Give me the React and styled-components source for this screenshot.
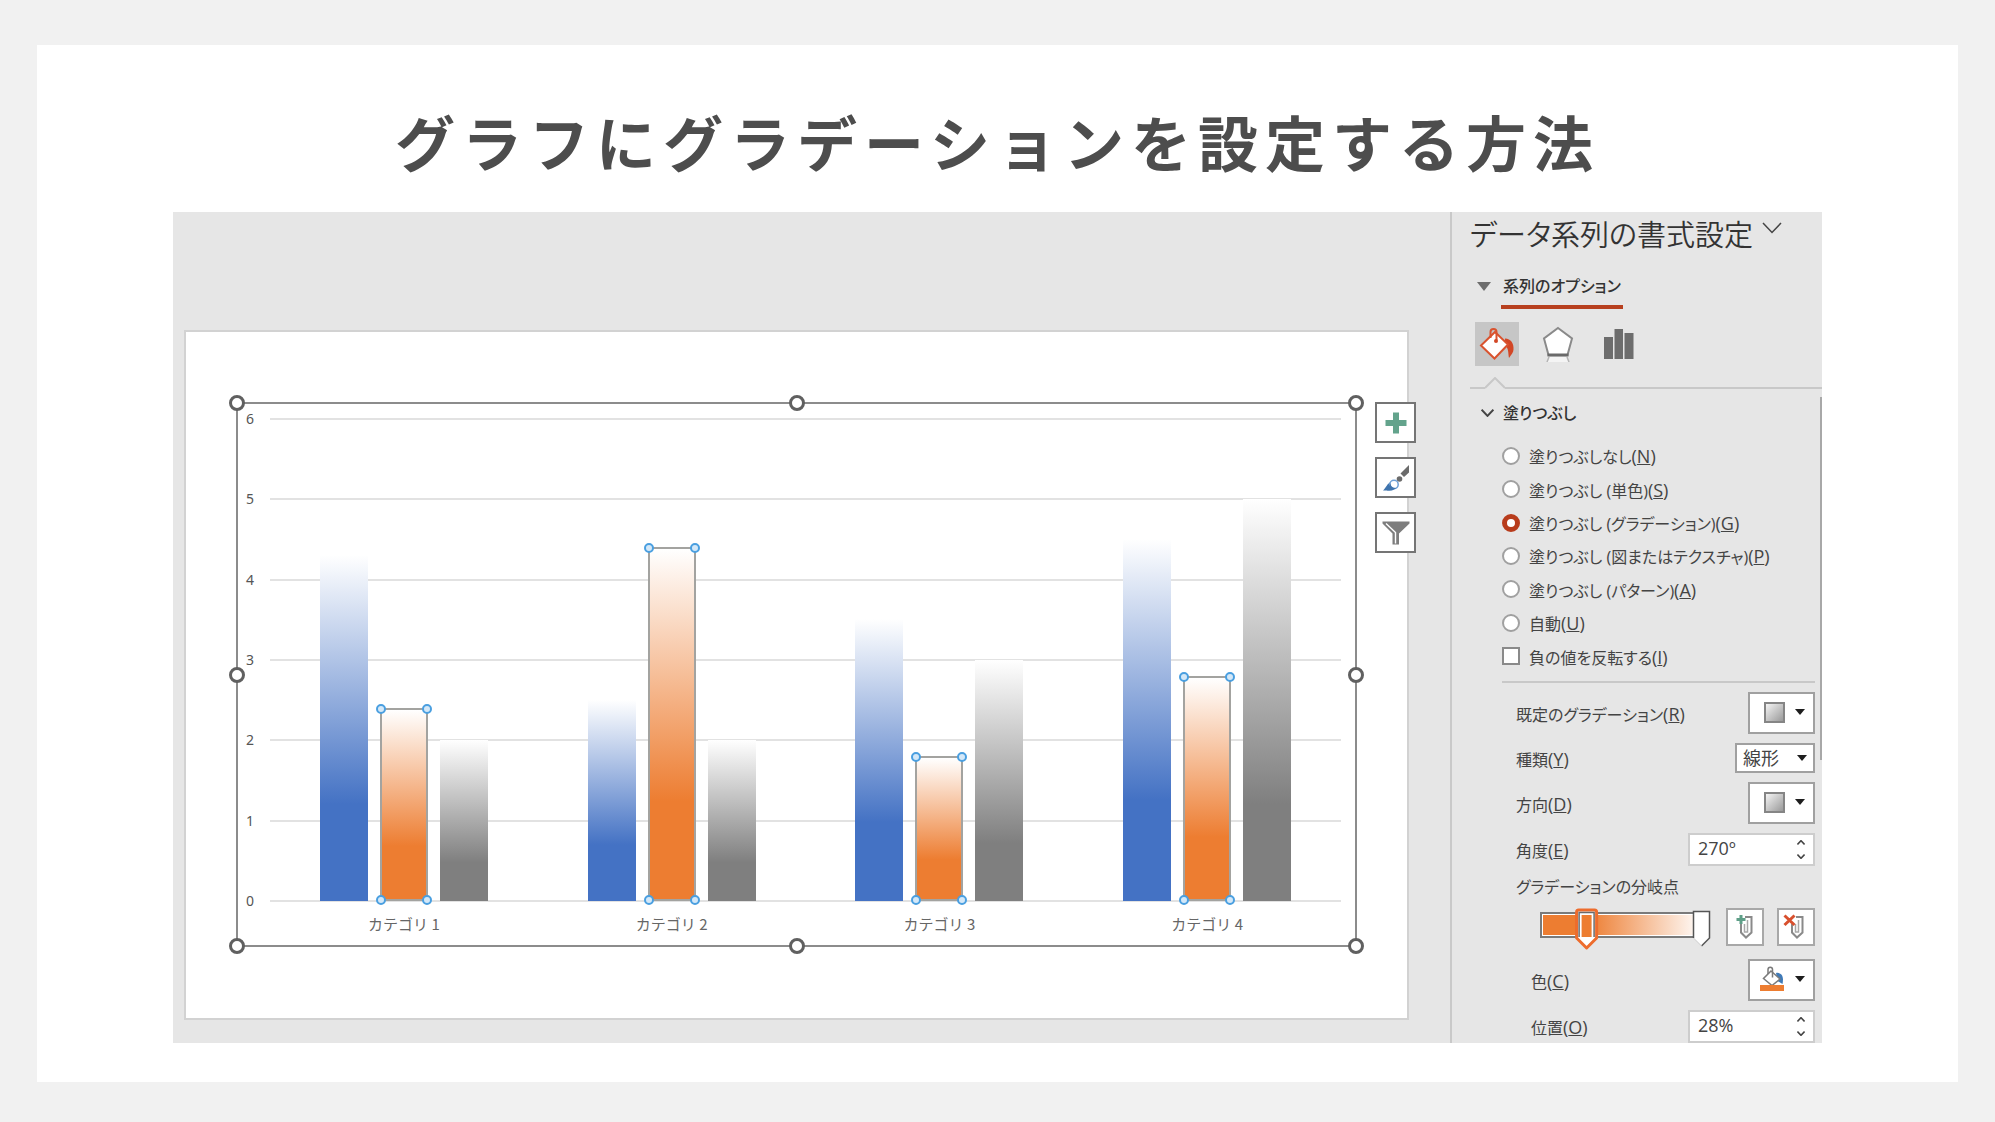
import React, { useState } from 'react';
import styled, { createGlobalStyle, css } from 'styled-components';

const SERIES = [
  { id: 'blue', color: '#4472c4', stop: 28 },
  { id: 'orange', color: '#ed7d31', stop: 28, selected: true },
  { id: 'gray', color: '#7f7f7f', stop: 24 },
];

const CATEGORIES = [
  { label: 'カテゴリ 1', values: [4.3, 2.4, 2] },
  { label: 'カテゴリ 2', values: [2.5, 4.4, 2] },
  { label: 'カテゴリ 3', values: [3.5, 1.8, 3] },
  { label: 'カテゴリ 4', values: [4.5, 2.8, 5] },
];

const TICKS = [6, 5, 4, 3, 2, 1, 0];
const MAX = 6;

const FILLS = [
  { id: 'none', text: '塗りつぶしなし', accessKey: 'N' },
  { id: 'solid', text: '塗りつぶし (単色)', accessKey: 'S' },
  { id: 'gradient', text: '塗りつぶし (グラデーション)', accessKey: 'G' },
  { id: 'picture', text: '塗りつぶし (図またはテクスチャ)', accessKey: 'P' },
  { id: 'pattern', text: '塗りつぶし (パターン)', accessKey: 'A' },
  { id: 'auto', text: '自動', accessKey: 'U' },
];

const FRAME_HANDLES = ['0 0', '50% 0', '100% 0', '0 50%', '100% 50%', '0 100%', '50% 100%', '100% 100%'];
const BAR_HANDLES = ['0 0', '100% 0', '0 100%', '100% 100%'];

const Keyed = ({ text, k }) => (
  <KeyedText>
    {text}
    <AccessKey>
      (<u>{k}</u>)
    </AccessKey>
  </KeyedText>
);

const Caret = () => (
  <svg width="10" height="6" viewBox="0 0 10 6" aria-hidden="true">
    <path d="M0 0h10L5 6z" fill="#1e1e1e" />
  </svg>
);

const Chevron = ({ width, height, strokeWidth = 2, up }) => (
  <svg width={width} height={height} viewBox="0 0 20 12" aria-hidden="true">
    <path
      d={up ? 'M1 11L10 1.5L19 11' : 'M1 1L10 10.5L19 1'}
      fill="none"
      stroke="#444"
      strokeWidth={strokeWidth}
    />
  </svg>
);

const FillIcon = () => (
  <svg width="36" height="34" viewBox="0 0 36 34" aria-hidden="true">
    <path d="M26 11.500c6 0 9 5 8.500 11c0 3-2 5-4.500 8.500c-1-5 0-9-4-13z" fill="#d24726" />
    <path d="M16 5L29 17.500L15.500 31.500L2 18.500z" fill="#fff" stroke="#d9532f" strokeWidth="2" />
    <path d="M11.500 11V5c0-4 6-4 6 0v8" fill="none" stroke="#d9532f" strokeWidth="2" />
    <circle cx="17" cy="14" r="2" fill="#d24726" />
  </svg>
);

const EffectsIcon = () => (
  <svg width="32" height="36" viewBox="0 0 32 36" aria-hidden="true">
    <path d="M16 2L30 12.500L25.500 29H6.500L2 12.500z" fill="#fff" stroke="#8a8a8a" strokeWidth="2" />
    <path d="M5.500 29h21" stroke="#6a6a6a" strokeWidth="3" />
    <path d="M7 31h18l2 5H5z" fill="#f4f4f4" />
    <path d="M7 31l-2 5M25 31l2 5" stroke="#b5b5b5" strokeWidth="1.500" />
  </svg>
);

const SeriesIcon = () => (
  <svg width="30" height="32" viewBox="0 0 30 32" aria-hidden="true">
    <path d="M0 9h9v22H0zM10.500 1h8.500v30h-8.500zM20.500 5h9v26h-9z" fill="#6d6d6d" />
  </svg>
);

const PlusIcon = () => (
  <svg width="22" height="22" viewBox="0 0 22 22" aria-hidden="true">
    <path d="M8 0.500h6V8h7.500v6H14v7.500H8V14H0.500V8H8z" fill="#63a38c" />
  </svg>
);

const BrushIcon = () => (
  <svg width="28" height="28" viewBox="0 0 28 28" aria-hidden="true">
    <path d="M27 1v7.500l-5 4.500l-3.500-3.500z" fill="#6b6b6b" />
    <circle cx="17.500" cy="15" r="2.800" fill="#6b6b6b" />
    <path d="M1 26.500C4 24 5 19 10 17.500c4-1 7 3 4 6.500c-3 3-8 2.500-13 2.500z" fill="#3f74ae" />
    <circle cx="12" cy="20.500" r="4.200" fill="#fff" stroke="#6fa0d6" strokeWidth="1.500" />
    <path d="M8.500 19c0 4 3 5 6 5l-4.500 2.500H5z" fill="#3f74ae" />
  </svg>
);

const FilterIcon = () => (
  <svg width="28" height="24" viewBox="0 0 28 24" aria-hidden="true">
    <path d="M0.500 0.500h27v2L17 12.500V23.500h-6.500V12.500L0.500 2.500z" fill="#7d7d7d" />
    <path d="M4 2.500l9.500 9v11" fill="none" stroke="#fff" strokeWidth="1.400" />
  </svg>
);

const Clip = () => (
  <>
    <path d="M14 4h6.500v15.500l-5.500 5l-5-5V11" fill="none" stroke="#8a8a8a" strokeWidth="2" />
    <path d="M13.500 11v8h3V7" fill="none" stroke="#a8a8a8" strokeWidth="1.500" />
  </>
);

const AddStopIcon = () => (
  <svg width="28" height="28" viewBox="0 0 28 28" aria-hidden="true">
    <Clip />
    <path d="M8.500 2h3v3h3v3h-3v3h-3V8h-3V5h3z" fill="#5f9f88" />
  </svg>
);

const RemoveStopIcon = () => (
  <svg width="28" height="28" viewBox="0 0 28 28" aria-hidden="true">
    <Clip />
    <path d="M2.500 2.500l10 9.500M12.500 2.500l-10 9.500" stroke="#d8502e" strokeWidth="3" />
  </svg>
);

const ColorIcon = () => (
  <svg width="26" height="26" viewBox="0 0 26 26" aria-hidden="true">
    <path d="M17 7c6-1 8 4 6.500 11l-5-3z" fill="#3f7ab8" />
    <path d="M12 5l9 8L13 19.500L4.500 12.500z" fill="#fff" stroke="#7a7a7a" strokeWidth="1.500" />
    <path d="M9 8V3.500c0-3 4.500-3 4.500 0v8" fill="none" stroke="#7a7a7a" strokeWidth="1.500" />
    <path d="M1 19h24v6H1z" fill="#ed7d31" />
  </svg>
);

const GradientStops = ({ position, onChange }) => {
  const x = 14 + position * 1.2;

  return (
    <StopSlider>
      <svg width="174" height="42" viewBox="0 0 174 42" aria-hidden="true">
        <defs>
          <linearGradient id="stops">
            <stop offset={`${position}%`} stopColor="#ed7d31" />
            <stop offset="100%" stopColor="#fff" />
          </linearGradient>
        </defs>
        <rect x="2" y="5" width="164" height="24" fill="#fff" stroke="#7a7a7a" strokeWidth="2" />
        <rect x="4" y="7" width="160" height="20" fill="url(#stops)" />
        <path d="M154.500 3.500h16V30l-8 8l-8-8z" fill="#fff" />
        <path d="M154.500 30V3.500h16V30l-8 8" fill="none" stroke="#555" strokeWidth="1.500" />
        <path d="M154.500 30l8 8" stroke="#ccc" strokeWidth="1" />
        <path
          d={`M${x - 8} 2h16q2 0 2 2v26L${x} 40L${x - 10} 30V4q0-2 2-2z`}
          fill="#fff"
          stroke="#ed6c2d"
          strokeWidth="3"
          strokeLinejoin="round"
        />
        <path d={`M${x - 7.5} 29V4.500h15V29`} fill="none" stroke="#6a6a6a" strokeWidth="1.500" />
        <rect x={x - 5} y="7" width="10" height="22" fill="#ed7d31" />
      </svg>
      <StopRange
        type="range"
        aria-label="グラデーションの分岐点"
        min="0"
        max="100"
        value={position}
        onChange={e => onChange(Number(e.target.value))}
      />
    </StopSlider>
  );
};

const Spinner = ({ id, value, onStep, onChange }) => (
  <SpinnerBox>
    <SpinnerInput id={id} type="text" value={value} onChange={onChange} />
    <SpinnerButtons>
      <StepButton type="button" aria-label="増やす" onClick={() => onStep(1)}>
        <Chevron width={8} height={5} strokeWidth={4} up />
      </StepButton>
      <StepButton type="button" aria-label="減らす" onClick={() => onStep(-1)}>
        <Chevron width={8} height={5} strokeWidth={4} />
      </StepButton>
    </SpinnerButtons>
  </SpinnerBox>
);

const Chart = () => (
  <ChartFrame>
    <Axis>
      {TICKS.map(tick => (
        <Tick key={tick}>{tick}</Tick>
      ))}
    </Axis>
    <Plot>
      {TICKS.map(tick => (
        <GridLine key={tick} />
      ))}
      <Groups>
        {CATEGORIES.map(({ label, values }) => (
          <Group key={label}>
            {SERIES.map((series, i) => (
              <Bar
                key={series.id}
                $color={series.color}
                $stop={series.stop}
                $selected={series.selected}
                style={{ height: `${(values[i] / MAX) * 100}%` }}
              >
                {series.selected && (
                  <HandleLayer>
                    {BAR_HANDLES.map(at => (
                      <BarHandle key={at} $at={at} />
                    ))}
                  </HandleLayer>
                )}
              </Bar>
            ))}
          </Group>
        ))}
      </Groups>
    </Plot>
    <Labels>
      {CATEGORIES.map(({ label }) => (
        <span key={label}>{label}</span>
      ))}
    </Labels>
    <HandleLayer>
      {FRAME_HANDLES.map(at => (
        <FrameHandle key={at} $at={at} />
      ))}
    </HandleLayer>
    <ChartButtons>
      <ChartButton type="button" aria-label="グラフ要素">
        <PlusIcon />
      </ChartButton>
      <ChartButton type="button" aria-label="グラフ スタイル">
        <BrushIcon />
      </ChartButton>
      <ChartButton type="button" aria-label="グラフ フィルター">
        <FilterIcon />
      </ChartButton>
    </ChartButtons>
  </ChartFrame>
);

const FormatPanel = () => {
  const [fill, setFill] = useState('gradient');
  const [invert, setInvert] = useState(false);
  const [angle, setAngle] = useState(270);
  const [position, setPosition] = useState(28);

  const clamp = value => Math.min(100, Math.max(0, value));

  return (
    <Panel>
      <PanelHeader>
        <PanelTitle>データ系列の書式設定</PanelTitle>
        <PlainButton type="button" aria-label="作業ウィンドウのオプション">
          <Chevron width={20} height={12} strokeWidth={1.5} />
        </PlainButton>
      </PanelHeader>
      <OptionsButton type="button">
        <svg width="14" height="9" viewBox="0 0 14 9" aria-hidden="true">
          <path d="M0 0h14L7 9z" fill="#6d6d6d" />
        </svg>
        <OptionsLabel>系列のオプション</OptionsLabel>
      </OptionsButton>
      <Tabs>
        <Tab type="button" aria-label="塗りつぶしと線" $active>
          <FillIcon />
        </Tab>
        <Tab type="button" aria-label="効果">
          <EffectsIcon />
        </Tab>
        <Tab type="button" aria-label="系列のオプション">
          <SeriesIcon />
        </Tab>
      </Tabs>
      <TabRule>
        <RuleStart />
        <svg width="20" height="12" viewBox="0 0 20 12" aria-hidden="true">
          <path d="M0 11L10 1L20 11" fill="none" stroke="#c8c8c8" strokeWidth="2" />
        </svg>
        <RuleEnd />
      </TabRule>
      <SectionButton type="button" aria-expanded="true">
        <Chevron width={13} height={8} strokeWidth={3} />
        塗りつぶし
      </SectionButton>
      <FillOptions aria-label="塗りつぶし">
        {FILLS.map(({ id, text, accessKey }) => (
          <Choice key={id}>
            <Radio
              type="radio"
              name="fill"
              checked={fill === id}
              onChange={() => setFill(id)}
            />
            <Keyed text={text} k={accessKey} />
          </Choice>
        ))}
        <Choice>
          <Checkbox
            type="checkbox"
            checked={invert}
            onChange={e => setInvert(e.target.checked)}
          />
          <Keyed text="負の値を反転する" k="I" />
        </Choice>
      </FillOptions>
      <Fields>
        <Field>
          <label htmlFor="preset"><Keyed text="既定のグラデーション" k="R" /></label>
          <MenuButton id="preset" type="button" aria-haspopup="true">
            <Swatch />
            <Caret />
          </MenuButton>
        </Field>
        <Field>
          <label htmlFor="kind"><Keyed text="種類" k="Y" /></label>
          <SelectBox>
            <Select id="kind" defaultValue="linear">
              <option value="linear">線形</option>
              <option value="radial">放射</option>
              <option value="rect">四角</option>
            </Select>
            <SelectCaret>
              <Caret />
            </SelectCaret>
          </SelectBox>
        </Field>
        <Field>
          <label htmlFor="direction"><Keyed text="方向" k="D" /></label>
          <MenuButton id="direction" type="button" aria-haspopup="true">
            <Swatch />
            <Caret />
          </MenuButton>
        </Field>
        <Field>
          <label htmlFor="angle"><Keyed text="角度" k="E" /></label>
          <Spinner
            id="angle"
            value={`${angle}º`}
            onChange={e => setAngle(parseInt(e.target.value, 10) || 0)}
            onStep={step => setAngle(angle + step * 10)}
          />
        </Field>
        <StopsTitle>グラデーションの分岐点</StopsTitle>
        <StopsRow>
          <GradientStops position={position} onChange={setPosition} />
          <StopButton type="button" aria-label="分岐点の追加">
            <AddStopIcon />
          </StopButton>
          <StopButton type="button" aria-label="分岐点の削除">
            <RemoveStopIcon />
          </StopButton>
        </StopsRow>
        <Field $nested>
          <label htmlFor="color"><Keyed text="色" k="C" /></label>
          <MenuButton id="color" type="button" aria-haspopup="true">
            <ColorIcon />
            <Caret />
          </MenuButton>
        </Field>
        <Field $nested>
          <label htmlFor="position"><Keyed text="位置" k="O" /></label>
          <Spinner
            id="position"
            value={`${position}%`}
            onChange={e => setPosition(clamp(parseInt(e.target.value, 10) || 0))}
            onStep={step => setPosition(clamp(position + step))}
          />
        </Field>
      </Fields>
      <ScrollThumb />
    </Panel>
  );
};

const App = () => (
  <>
    <GlobalStyle />
    <Page>
      <Card>
        <Title>グラフにグラデーションを設定する方法</Title>
        <Workspace>
          <Canvas>
            <Slide>
              <Chart />
            </Slide>
          </Canvas>
          <FormatPanel />
        </Workspace>
      </Card>
    </Page>
  </>
);

const GlobalStyle = createGlobalStyle`
  * {
    box-sizing: border-box;
  }
  body {
    margin: 0;
    background: #f1f1f1;
    font-family: 'Open Sans', 'Noto Sans CJK JP', sans-serif;
  }
  button, input, select {
    font: inherit;
    color: inherit;
    margin: 0;
  }
  svg {
    display: block;
    flex: none;
  }
`;

const Page = styled.main`
  display: flex;
  min-height: 100vh;
  padding: 45px 37px 40px;
`;

const Card = styled.section`
  flex: 1;
  padding: 52px 136px 39px;
  background: #fff;
`;

const Title = styled.h1`
  margin: 0 0 27px;
  font-family: 'Noto Sans CJK JP', sans-serif;
  font-size: 60px;
  line-height: 88px;
  font-weight: 700;
  letter-spacing: 7px;
  text-align: center;
  color: #4d4d4d;
`;

const Workspace = styled.div`
  display: grid;
  grid-template-columns: 1fr 372px;
  background: #e6e6e6;
`;

const Canvas = styled.div`
  padding: 118px 41px 23px 11px;
`;

const Slide = styled.div`
  padding: 70px 50px 71px;
  border: 2px solid #d2d2d2;
  background: #fff;
`;

const ChartFrame = styled.div`
  position: relative;
  display: grid;
  grid-template-columns: 32px 1fr;
  grid-template-rows: 484px 43px;
  padding: 14px 14px 0 0;
  border: 2px solid #8c8c8c;
`;

const HandleLayer = styled.div`
  position: absolute;
  inset: -1px;
`;

const Axis = styled.div`
  display: flex;
  flex-direction: column;
  justify-content: space-between;
  padding-left: 8px;
`;

const Tick = styled.span`
  height: 2px;
  font-family: 'Noto Sans', sans-serif;
  font-size: 14px;
  line-height: 2px;
  color: #555;
`;

const Plot = styled.div`
  position: relative;
  display: flex;
  flex-direction: column;
  justify-content: space-between;
`;

const GridLine = styled.div`
  height: 2px;
  background: #e2e2e2;
`;

const Groups = styled.div`
  position: absolute;
  inset: 0 0 1px;
  display: grid;
  grid-template-columns: repeat(4, 1fr);
`;

const Group = styled.div`
  display: flex;
  align-items: flex-end;
  justify-content: center;
  gap: 12px;
`;

const Bar = styled.div`
  position: relative;
  width: 48px;
  background: ${({ $color, $stop }) =>
    `linear-gradient(to top, ${$color} ${$stop}%, #fff 100%)`};
  ${({ $selected }) =>
    $selected &&
    css`
      border: 2px solid #a3a3a0;
    `}
`;

const handle = css`
  position: absolute;
  left: ${({ $at }) => $at.split(' ')[0]};
  top: ${({ $at }) => $at.split(' ')[1]};
  transform: translate(-50%, -50%);
  border-radius: 50%;
`;

const BarHandle = styled.span`
  ${handle}
  width: 10px;
  height: 10px;
  border: 2px solid #4a9fe0;
  background: #d4e8f8;
`;

const FrameHandle = styled.span`
  ${handle}
  width: 16px;
  height: 16px;
  border: 3px solid #606060;
  background: #fff;
`;

const Labels = styled.div`
  grid-column: 2;
  display: grid;
  grid-template-columns: repeat(4, 1fr);
  place-items: center;
  font-family: 'Noto Sans CJK JP', sans-serif;
  font-size: 15px;
  line-height: 24px;
  font-weight: 400;
  color: #666;
`;

const ChartButtons = styled.div`
  position: absolute;
  top: -2px;
  left: calc(100% + 20px);
  display: grid;
  gap: 14px;
`;

const ChartButton = styled.button`
  display: grid;
  place-items: center;
  width: 41px;
  height: 41px;
  padding: 0;
  border: 2px solid #757575;
  background: #fff;
`;

const Panel = styled.aside`
  position: relative;
  padding-left: 18px;
  border-left: 2px solid #c9c9c9;
  font-size: 16px;
  line-height: 24px;
  font-feature-settings: 'palt';
  color: #444;
`;

const KeyedText = styled.span`
  display: block;
  padding-top: 2px;
`;

const AccessKey = styled.span`
  font-size: 18px;
`;

const PlainButton = styled.button`
  padding: 0;
  border: 0;
  background: none;
`;

const PanelHeader = styled.header`
  display: flex;
  align-items: flex-start;
  gap: 9px;
  height: 46px;

  ${PlainButton} {
    margin-top: 10px;
  }
`;

const PanelTitle = styled.h2`
  margin: 0;
  font-family: 'Noto Sans CJK JP', sans-serif;
  font-size: 29px;
  line-height: 42px;
  font-weight: 350;
  white-space: nowrap;
  color: #333;
`;

const OptionsButton = styled(PlainButton)`
  display: flex;
  gap: 10px;
  margin-top: 14px;
  padding-left: 7px;

  svg {
    margin-top: 10px;
  }
`;

const OptionsLabel = styled.span`
  padding: 2px 2px 7px;
  border-bottom: 4px solid #b7401f;
  font-weight: 500;
  color: #333;
`;

const Tabs = styled.div`
  display: flex;
  gap: 17px;
  margin: 13px 0 11px 5px;
`;

const Tab = styled.button`
  display: grid;
  place-items: center;
  width: 44px;
  height: 44px;
  padding: 0;
  border: 0;
  background: ${({ $active }) => ($active ? '#c6c6c6' : 'none')};
`;

const TabRule = styled.div`
  display: flex;
  align-items: flex-end;
`;

const RuleStart = styled.div`
  width: 15px;
  height: 2px;
  background: #c8c8c8;
`;

const RuleEnd = styled(RuleStart)`
  flex: 1;
`;

const SectionButton = styled(PlainButton)`
  display: flex;
  align-items: center;
  gap: 9px;
  margin-top: 12px;
  padding-left: 11px;
  font-weight: 500;
  color: #333;
`;

const FillOptions = styled.fieldset`
  display: grid;
  grid-auto-rows: 1fr;
  height: 234px;
  margin: 14px 0 0;
  padding: 0 0 0 32px;
  border: 0;
`;

const Choice = styled.label`
  display: flex;
  align-items: center;
  gap: 9px;
`;

const Radio = styled.input`
  appearance: none;
  width: 18px;
  height: 18px;
  border: 2px solid #a0a0a0;
  border-radius: 50%;
  background: #fff;
  &:checked {
    border: 5px solid #b83c1c;
  }
`;

const Checkbox = styled.input`
  appearance: none;
  width: 18px;
  height: 18px;
  border: 2px solid #8a8a8a;
  background: #fff;
  &:checked {
    background: #b83c1c;
  }
`;

const Fields = styled.div`
  display: grid;
  gap: 9px;
  margin: 8px 7px 0 32px;
  padding-top: 9px;
  border-top: 2px solid #c8c8c8;
`;

const Field = styled.div`
  display: flex;
  align-items: center;
  justify-content: space-between;
  padding-left: ${({ $nested }) => ($nested ? '29px' : '14px')};
`;

const MenuButton = styled.button`
  display: flex;
  align-items: center;
  justify-content: flex-end;
  gap: 10px;
  width: 67px;
  height: 42px;
  padding: 0 8px 2px 0;
  border: 2px solid #a0a0a0;
  background: #fff;
`;

const Swatch = styled.span`
  width: 21px;
  height: 21px;
  border: 2px solid #858585;
  background: linear-gradient(135deg, #f4f4f4, #999);
`;

const SelectBox = styled.div`
  position: relative;
  width: 80px;
`;

const Select = styled.select`
  appearance: none;
  display: block;
  width: 100%;
  height: 30px;
  padding: 0 0 0 6px;
  border: 2px solid #a0a0a0;
  border-radius: 0;
  background: #fff;
  font-size: 18px;
`;

const SelectCaret = styled.span`
  position: absolute;
  top: 12px;
  right: 8px;
  pointer-events: none;
`;

const SpinnerBox = styled.div`
  display: flex;
  width: 127px;
  height: 33px;
  border: 2px solid #cdcdcd;
  background: #fff;
`;

const SpinnerInput = styled.input`
  flex: 1;
  min-width: 0;
  padding: 0 0 3px 8px;
  border: 0;
  background: none;
  font-size: 18px;
`;

const SpinnerButtons = styled.div`
  display: grid;
  width: 24px;
`;

const StepButton = styled(PlainButton)`
  display: grid;
  place-items: center;
`;

const StopsTitle = styled.div`
  padding-left: 14px;
`;

const StopsRow = styled.div`
  display: flex;
  justify-content: flex-end;
  gap: 13px;
  height: 42px;
`;

const StopSlider = styled.div`
  position: relative;
`;

const StopRange = styled.input`
  position: absolute;
  inset: 0;
  width: 100%;
  opacity: 0;
`;

const StopButton = styled.button`
  display: grid;
  place-items: center;
  width: 38px;
  height: 38px;
  padding: 0;
  border: 2px solid #a8a8a8;
  background: #fff;
`;

const ScrollThumb = styled.div`
  position: absolute;
  top: 185px;
  right: 0;
  width: 2px;
  height: 363px;
  background: #a8a8a8;
`;

export default App;
